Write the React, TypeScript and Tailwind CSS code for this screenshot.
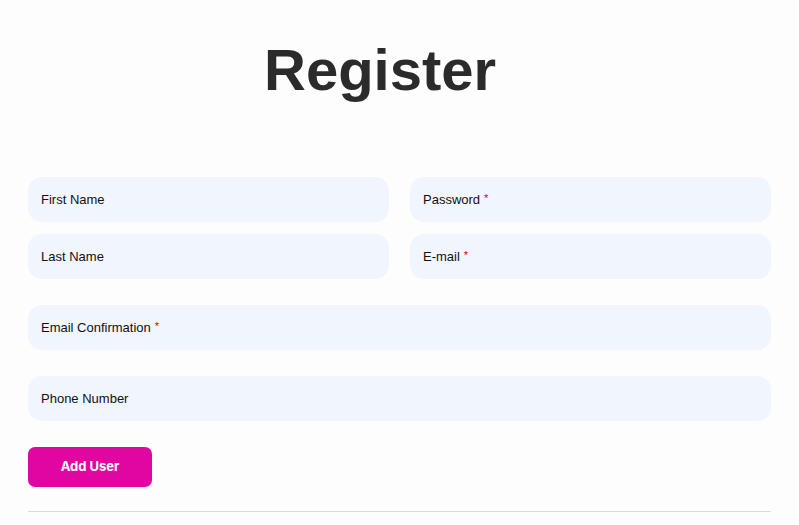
import React from "react";

function Field({ label, required }: { label: string; required?: boolean }) {
  return (
    <div className="h-[45px] rounded-[14px] bg-[#f1f5fd] flex items-center pl-[13px] text-[13px] text-[#111111]">
      <span>{label}</span>
      {required && <span className="text-[#d0021b] ml-[4px] text-[11px] relative -top-[1px]">*</span>}
    </div>
  );
}

export default function App() {
  return (
    <div className="min-h-[525px] bg-[#fdfdfd] px-[28px] pb-4" style={{ fontFamily: '"Liberation Sans", Arial, sans-serif' }}>
      <div className="pt-[41px] h-[177px]">
        <h1 className="text-[58px] leading-none font-bold text-[#2b2b2b] pl-[236px]">Register</h1>
      </div>
      <div className="grid grid-cols-2 gap-x-[21px] gap-y-[12px]">
        <Field label="First Name" />
        <Field label="Password" required />
        <Field label="Last Name" />
        <Field label="E-mail" required />
      </div>
      <div className="mt-[26px]">
        <Field label="Email Confirmation" required />
      </div>
      <div className="mt-[26px]">
        <Field label="Phone Number" />
      </div>
      <button
        className="block mt-[26px] w-[124px] h-[40px] rounded-[7px] bg-[#e1069f] text-white text-[13px] font-bold"
        style={{ fontFamily: 'Inter, "Liberation Sans", sans-serif' }}
      >
        Add User
      </button>
      <div className="mt-[24px] h-px bg-[#d9d9e1]" />
    </div>
  );
}
